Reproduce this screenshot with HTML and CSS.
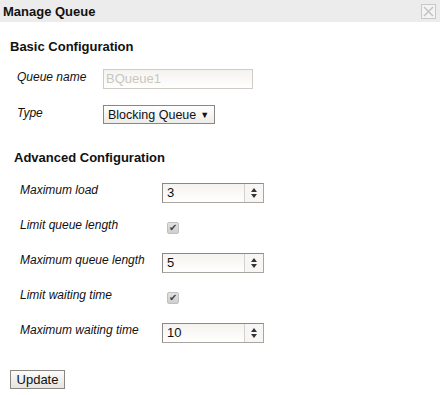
FILE: index.html
```html
<!DOCTYPE html>
<html lang="en">
<head>
    <meta charset="UTF-8">
    <title>Manage Queue</title>
    <link rel="stylesheet" href="styles.css">
</head>
<body>
    <div class="dialog">
        <!-- title bar -->
        <div class="titlebar">
            <span class="title">Manage Queue</span>
            <span class="close"><svg width="11" height="11" viewBox="0 0 11 11"><path d="M1 1 L10 10 M10 1 L1 10" stroke="#c4c4c4" stroke-width="1.6"/></svg></span>
        </div>

        <div class="content">
            <h3 class="section-title basic">Basic Configuration</h3>
            <div class="form basic-form">
                <label class="label">Queue name</label>
                <div class="field"><span class="input name-input disabled">BQueue1</span></div>

                <label class="label">Type</label>
                <div class="field"><span class="select">Blocking Queue <span class="arrow">&#9660;</span></span></div>
            </div>

            <h3 class="section-title advanced">Advanced Configuration</h3>
            <div class="form adv-form">
                <label class="label">Maximum load</label>
                <div class="field">
                    <span class="input spin-input">3<span class="spinner"><span class="up"></span><span class="down"></span></span></span>
                </div>

                <label class="label">Limit queue length</label>
                <div class="field"><span class="checkbox">&#10004;</span></div>

                <label class="label">Maximum queue length</label>
                <div class="field">
                    <span class="input spin-input">5<span class="spinner"><span class="up"></span><span class="down"></span></span></span>
                </div>

                <label class="label">Limit waiting time</label>
                <div class="field"><span class="checkbox">&#10004;</span></div>

                <label class="label">Maximum waiting time</label>
                <div class="field">
                    <span class="input spin-input">10<span class="spinner"><span class="up"></span><span class="down"></span></span></span>
                </div>
            </div>

            <button class="update-btn">Update</button>
        </div>
    </div>
</body>
</html>
```

FILE: styles.css
```css
body {
    margin: 0;
    padding: 0;
    background: #fff;
    font-family: 'Liberation Sans', Arial, sans-serif;
    color: #111;
}

.dialog {
    width: 440px;
    height: 395px;
}

/* title bar */
.titlebar {
    height: 22px;
    background: #ececec;
    display: flex;
    align-items: center;
    justify-content: space-between;
    padding: 0 4px 0 3px;
}

.title {
    font-weight: bold;
    font-size: 13px;
}

.close {
    width: 13px;
    height: 13px;
    border: 1px solid #c8c8c8;
    display: flex;
    align-items: center;
    justify-content: center;
    background: #f4f4f4;
}

.content {
    padding: 0 0 0 10px;
}

.section-title {
    font-size: 13px;
    font-weight: bold;
    margin: 0;
}

.section-title.basic {
    padding-top: 17px;
}

.section-title.advanced {
    padding-top: 26px;
    margin-left: 4px;
}

.form {
    display: grid;
}

.basic-form {
    grid-template-columns: 86px 1fr;
    row-gap: 16px;
    align-items: center;
    margin-left: 7px;
    margin-top: 15px;
}

.adv-form {
    grid-template-columns: 142px 1fr;
    grid-auto-rows: 20px;
    row-gap: 15px;
    align-items: start;
    margin-left: 10px;
    margin-top: 18px;
}

.label {
    font-style: italic;
    font-size: 12px;
    align-self: start;
}

.basic-form .label {
    padding-top: 1px;
}

.field {
    display: flex;
}

.input {
    box-sizing: border-box;
    height: 20px;
    border: 1px solid #a9a6a1;
    border-top-color: #8c8984;
    border-left-color: #8c8984;
    background: linear-gradient(#f5f3ef, #fff);
    font-size: 13px;
    line-height: 18px;
    padding-left: 5px;
    display: flex;
    align-items: center;
}

.name-input {
    width: 150px;
    height: 20px;
    border-color: #cfccc7;
    color: #c8c6c2;
    padding-left: 2px;
}

.spin-input {
    width: 102px;
    position: relative;
    padding-left: 4px;
}

.spinner {
    position: absolute;
    right: 0;
    top: 0;
    bottom: 0;
    width: 18px;
    border-left: 1px solid #d4d1cc;
    background: #f7f6f4;
    display: flex;
    flex-direction: column;
    align-items: center;
    justify-content: center;
    gap: 2px;
}

.up, .down {
    width: 0;
    height: 0;
    border-left: 3px solid transparent;
    border-right: 3px solid transparent;
}

.up {
    border-bottom: 4px solid #333;
}

.down {
    border-top: 4px solid #333;
}

.select {
    box-sizing: border-box;
    height: 19px;
    border: 1px solid #8a8782;
    background: linear-gradient(#fff, #eeece8);
    font-size: 12.5px;
    padding: 0 5px 0 4px;
    white-space: nowrap;
    display: flex;
    align-items: center;
}

.arrow {
    font-size: 9px;
    margin-left: 4px;
}

.checkbox {
    box-sizing: border-box;
    width: 12px;
    height: 12px;
    margin-left: 5px;
    margin-top: 4px;
    border: 1px solid #c0c0c0;
    border-radius: 2px;
    background: linear-gradient(#e2e2e2, #cfcfcf);
    color: #444;
    font-size: 10px;
    line-height: 10px;
    text-align: center;
}

.update-btn {
    margin-top: 27px;
    height: 19px;
    width: 55px;
    padding: 0;
    font-family: 'Liberation Sans', Arial, sans-serif;
    font-size: 13px;
    color: #111;
    border: 1px solid #8a8782;
    background: linear-gradient(#fbfbfa, #e6e4e0);
    border-radius: 0;
}
```
